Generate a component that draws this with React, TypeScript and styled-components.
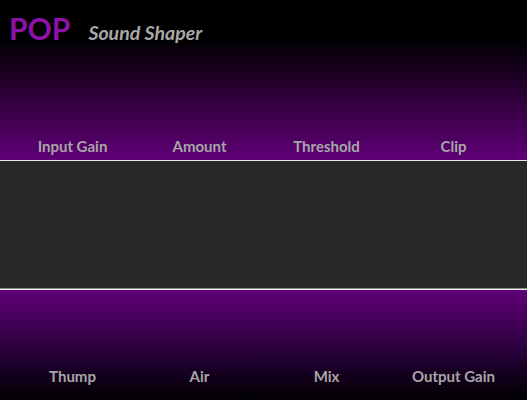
import React from "react";
import styled, { createGlobalStyle } from "styled-components";

const Global = createGlobalStyle`
  html, body { margin: 0; padding: 0; background: #000; }
  body { width: 527px; height: 400px; overflow: hidden; font-family: Lato, "Open Sans", sans-serif; }
`;

const Frame = styled.div`
  width: 527px;
  height: 400px;
  display: flex;
  flex-direction: column;
`;

const TopPanel = styled.div`
  height: 160px;
  display: flex;
  flex-direction: column;
  justify-content: space-between;
  background: linear-gradient(to bottom, #000 0px, #000 40px, #600078 160px);
`;

const Header = styled.div`
  display: flex;
  align-items: baseline;
  gap: 18px;
  padding: 10px 0 0 9px;
`;

const Logo = styled.div`
  font-family: Lato, sans-serif;
  font-weight: 700;
  font-size: 30px;
  line-height: 36px;
  color: #8c12a8;
`;

const Subtitle = styled.div`
  font-family: Lato, sans-serif;
  font-weight: 700;
  font-style: italic;
  font-size: 19.5px;
  color: #a8a8a8;
`;

const LabelRow = styled.div<{ $pad: number }>`
  display: grid;
  grid-template-columns: repeat(4, 127px);
  padding-left: 9px;
  padding-bottom: ${(p) => p.$pad}px;
`;

const Label = styled.div`
  text-align: center;
  font-family: Lato, sans-serif;
  font-weight: 700;
  font-size: 15px;
  line-height: 18px;
  color: #a6a6a6;
`;

const Middle = styled.div`
  height: 127px;
  background: #282828;
  border-top: 1px solid #e6e6e6;
  border-bottom: 1px solid #8a8a8a;
  box-shadow: 0 1px 0 #f0f0f0;
`;

const BottomPanel = styled.div`
  margin-top: 1px;
  flex: 1;
  display: flex;
  flex-direction: column;
  justify-content: flex-end;
  background: linear-gradient(to bottom, #600078 0px, #200030 70px, #000 110px);
`;

const top = ["Input Gain", "Amount", "Threshold", "Clip"];
const bottom = ["Thump", "Air", "Mix", "Output Gain"];

export default function App() {
  return (
    <>
      <Global />
      <Frame>
        <TopPanel>
          <Header>
            <Logo>POP</Logo>
            <Subtitle>Sound Shaper</Subtitle>
          </Header>
          <LabelRow $pad={5}>
            {top.map((t) => (
              <Label key={t}>{t}</Label>
            ))}
          </LabelRow>
        </TopPanel>
        <Middle />
        <BottomPanel>
          <LabelRow $pad={15}>
            {bottom.map((t) => (
              <Label key={t}>{t}</Label>
            ))}
          </LabelRow>
        </BottomPanel>
      </Frame>
    </>
  );
}
